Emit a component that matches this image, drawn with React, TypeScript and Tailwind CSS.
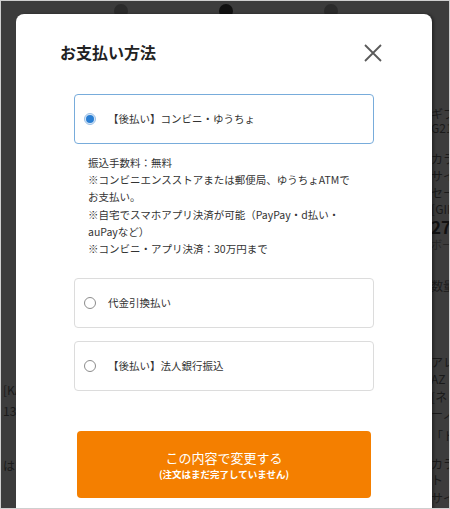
import React from "react";

const jp = { fontFamily: '"Noto Sans CJK JP", "Noto Sans", sans-serif' };

function Radio({ checked }: { checked?: boolean }) {
  return checked ? (
    <span className="flex h-[12px] w-[12px] shrink-0 items-center justify-center rounded-full border border-[#9cc0e6] bg-[#dbe9f7]">
      <span className="h-[8px] w-[8px] rounded-full bg-[#2a7fd4]" />
    </span>
  ) : (
    <span className="h-[12px] w-[12px] shrink-0 rounded-full border border-[#8c8c8c] bg-white" />
  );
}

function Option({ label, checked }: { label: string; checked?: boolean }) {
  return (
    <div
      className={`flex h-[50px] w-[300px] items-center gap-[12px] rounded-[4px] border pl-[9px] ${
        checked ? "border-[#78acdb]" : "border-[#dcdcdc]"
      }`}
    >
      <Radio checked={checked} />
      <span className="text-[10.5px] text-[#333] whitespace-nowrap">{label}</span>
    </div>
  );
}

export default function App() {
  return (
    <div
      className="relative h-[509px] w-[450px] overflow-hidden border border-[#cfcfcf] bg-[#3c3c3c]"
      style={jp}
    >
      {/* background page (under overlay) */}
      <div className="flex flex-col">
        <div className="flex h-[20px] items-start">
          <span className="ml-[113px] mt-[3px] h-[14px] w-[14px] rounded-full bg-[#2b2b2b]" />
          <span className="ml-[91px] mt-[3px] h-[14px] w-[14px] rounded-full bg-[#111]" />
          <span className="ml-[91px] mt-[3px] h-[14px] w-[14px] rounded-full bg-[#2b2b2b]" />
        </div>
        <div className="flex">
          <div className="flex w-[432px] flex-col pl-[2px] text-[12px] leading-[14px] text-[#1a1a1a]">
            <div className="mt-[362px] whitespace-nowrap">[KAZ</div>
            <div className="mt-[7px] whitespace-nowrap">1390</div>
            <div className="mt-[41px] whitespace-nowrap">はすで</div>
          </div>
          <div className="flex w-[18px] flex-col overflow-hidden text-[12px] leading-[14px] text-[#1a1a1a]">
            <div className="mt-[86px] whitespace-nowrap">ギフト</div>
            <div className="whitespace-nowrap">G21</div>
            <div className="mt-[17px] whitespace-nowrap">カラー</div>
            <div className="mt-[3px] whitespace-nowrap">サイズ</div>
            <div className="mt-[3px] whitespace-nowrap">セール</div>
            <div className="mt-[2px] whitespace-nowrap">[GIF</div>
            <div className="mt-[2px] whitespace-nowrap text-[17px] font-bold leading-[18px] text-[#111]">27</div>
            <div className="mt-[1px] whitespace-nowrap text-[11px] text-[#262626]">ボーナス</div>
            <div className="mt-[28px] whitespace-nowrap">数量</div>
            <div className="mt-[62px] whitespace-nowrap">アレ</div>
            <div className="mt-[3px] whitespace-nowrap">AZ</div>
            <div className="mt-[4px] whitespace-nowrap">[ネ</div>
            <div className="mt-[3px] whitespace-nowrap">ーノ</div>
            <div className="mt-[8px] whitespace-nowrap">「ト</div>
            <div className="mt-[14px] whitespace-nowrap">カラ</div>
            <div className="mt-[2px] whitespace-nowrap">ト</div>
            <div className="mt-[4px] whitespace-nowrap">サイ</div>
          </div>
        </div>
      </div>

      {/* modal */}
      <div className="absolute left-[15px] top-[13px] h-[540px] w-[416px] rounded-t-[8px] bg-white shadow-[2px_0_3px_rgba(0,0,0,0.35)]">
        <div className="flex items-center justify-between pl-[44px] pr-[50px] pt-[26px]">
          <h2 className="text-[16px] font-bold leading-[24px] text-[#222]">お支払い方法</h2>
          <svg width="18" height="18" viewBox="0 0 18 18" className="mt-[2px]">
            <path d="M1 1 L17 17 M17 1 L1 17" stroke="#5a5a5a" strokeWidth="1.8" fill="none" />
          </svg>
        </div>

        <div className="ml-[58px] mt-[30px] flex flex-col">
          <Option label="【後払い】コンビニ・ゆうちょ" checked />
          <div className="mt-[10px] pl-[14px] text-[10.5px] leading-[17.2px] text-[#333] whitespace-nowrap">
            振込手数料：無料
            <br />
            ※コンビニエンスストアまたは郵便局、ゆうちょATMで
            <br />
            お支払い。
            <br />
            ※自宅でスマホアプリ決済が可能（PayPay・d払い・
            <br />
            auPayなど）
            <br />
            ※コンビニ・アプリ決済：30万円まで
          </div>
          <div className="mt-[21px]">
            <Option label="代金引換払い" />
          </div>
          <div className="mt-[13px]">
            <Option label="【後払い】法人銀行振込" />
          </div>
          <button className="ml-[3px] mt-[40px] flex h-[67px] w-[294px] flex-col items-center justify-center rounded-[4px] bg-[#f47f00] text-white">
            <span className="text-[13px] leading-[18px]">この内容で変更する</span>
            <span className="text-[9.5px] font-bold leading-[14px]">(注文はまだ完了していません)</span>
          </button>
        </div>
      </div>
    </div>
  );
}
